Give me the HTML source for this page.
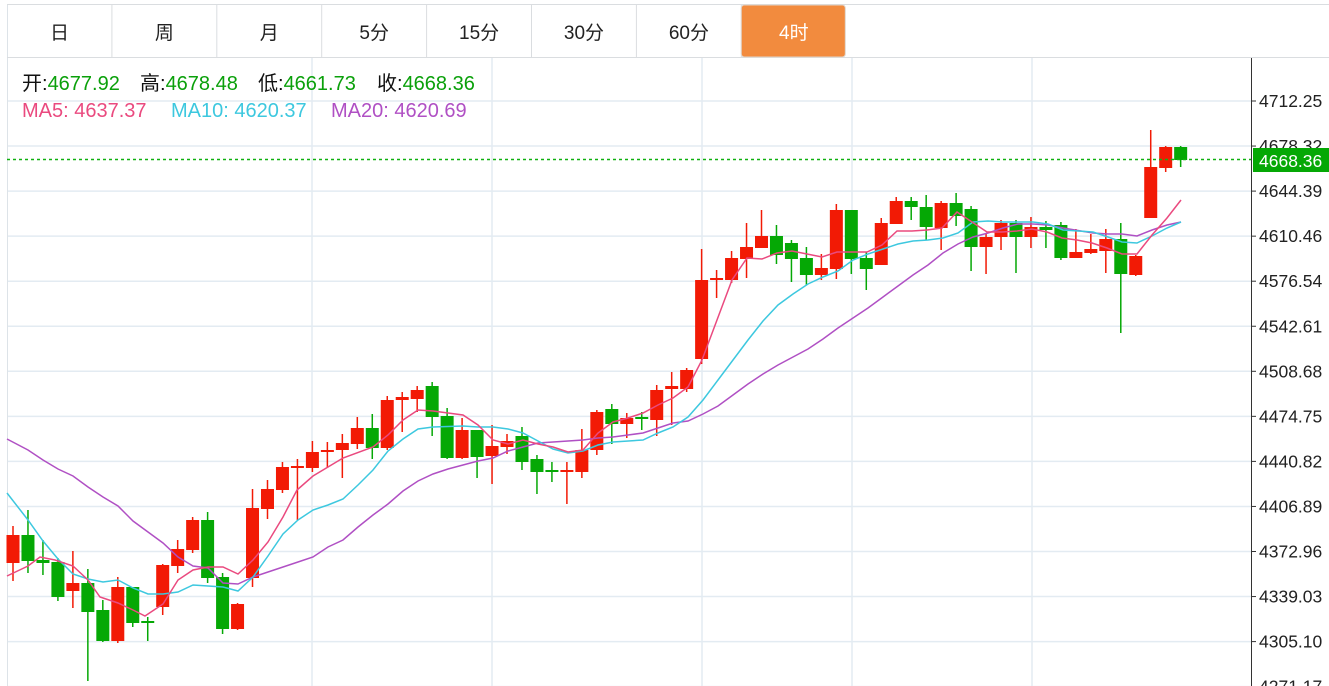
<!DOCTYPE html>
<html><head><meta charset="utf-8">
<style>
html,body{margin:0;padding:0;background:#fff;width:1329px;height:686px;overflow:hidden;}
svg{display:block;}
text{font-family:"Liberation Sans","Noto Sans CJK SC",sans-serif;}
</style></head>
<body>
<svg id="s" width="1329" height="686" xmlns="http://www.w3.org/2000/svg"></svg>
<script>
const s=document.getElementById('s');
let h='';
const vx=[312,492,702,852,1032];
for(let k=0;k<14;k++){const y=101+k*45.05;h+=`<line x1="7" y1="${y}" x2="1251" y2="${y}" stroke="#e3ebf2" stroke-width="1.5"/>`;}
vx.forEach(x=>h+=`<line x1="${x}" y1="58" x2="${x}" y2="686" stroke="#e3ebf2" stroke-width="1.5"/>`);
h+=`<line x1="7.5" y1="4" x2="7.5" y2="686" stroke="#dde3e8" stroke-width="1"/>`;
h+=`<line x1="7" y1="4.5" x2="1329" y2="4.5" stroke="#dadde0"/>`;
h+=`<line x1="7" y1="57.5" x2="1329" y2="57.5" stroke="#dadde0"/>`;
const tabs=['日','周','月','5分','15分','30分','60分','4时'];
tabs.forEach((t,i)=>{const x=7+i*104.9;
 if(i==7){h+=`<rect x="${x}" y="5" width="104" height="52" rx="3" fill="#f28b3e" stroke="#e0d6cc"/>`;}
 else h+=`<line x1="${x+104.9}" y1="5" x2="${x+104.9}" y2="57" stroke="#dadde0"/>`;
 h+=`<text x="${x+52.5}" y="39" text-anchor="middle" font-size="19" fill="${i==7?'#fff':'#222'}">${t}</text>`;});
const c=[
['R',535,563,526,581],['G',535,561,510,573],['G',560,563,540,575],['G',562,597,558,601],['R',583,591,551,608],
['G',583,612,569,681],['G',610,641,600,642],['R',587,641,577,643],['G',587,623,587,627],['G',621,623,617,641],
['R',565,607,564,615],['R',549,566,540,573],['R',520,550,517,553],['G',520,578,512,583],['G',577,629,573,634],
['R',604,629,603,630],['R',508,578,489,587],['R',489,509,480,519],['R',467,490,462,493],['R',466,468,459,520],
['R',452,468,441,472],['R',450,452,442,468],['R',443,450,434,478],['R',428,444,417,449],['G',428,448,414,459],
['R',400,448,396,450],['R',397,400,392,432],['R',390,399,386,412],['G',386,417,382,436],['G',416,458,408,459],
['R',430,458,418,459],['G',430,457,430,478],['R',446,456,425,484],['R',441,447,434,454],['G',436,462,427,470],
['G',459,472,455,494],['G',470,472,462,482],['R',470,472,462,504],['R',450,472,429,478],['R',412,450,410,455],
['G',409,424,404,444],['R',418,424,413,438],['G',417,419,412,430],['R',390,420,385,436],['R',386,389,372,425],
['R',370,389,368,392],['R',280,359,249,364],['R',278,280,270,298],['R',258,280,251,283],['R',247,259,223,278],
['R',236,248,210,248],['G',236,255,225,264],['G',243,259,240,282],['G',258,275,247,285],['R',268,275,254,280],
['R',210,269,204,279],['G',210,259,210,274],['G',258,269,252,290],['R',223,265,218,265],['R',201,224,197,224],
['G',201,207,197,220],['G',207,227,195,240],['R',203,228,201,250],['G',203,216,193,226],['G',209,247,206,271],
['R',237,247,234,274],['R',223,237,220,250],['G',223,237,220,273],['R',227,237,217,248],['G',227,230,221,248],
['G',225,258,222,260],['R',252,258,229,258],['R',249,253,234,254],['R',239,251,229,273],['G',239,274,223,333],
['R',256,275,255,276],['R',167,218,130,218],['R',147,168,146,172],['G',147,160,146,167]];
c.forEach((d,i)=>{const x=13+i*14.97;const col=d[0]=='R'?'#f21a05':'#05a805';
 h+=`<line x1="${x}" y1="${d[3]}" x2="${x}" y2="${d[4]}" stroke="${col}" stroke-width="1.5"/>`;
 h+=`<rect x="${x-6.5}" y="${d[1]}" width="13" height="${Math.max(1.5,d[2]-d[1])}" fill="${col}"/>`;});
const ma5=[[7,576],[28,566],[40,557],[55,560],[73,566],[88,580],[100,597],[118,603],[133,610],[145,616],[163,604],[178,580],[193,570],[208,567],[223,567],[238,574],[253,560],[268,542],[283,517],[297,490],[313,476],[343,458],[373,447],[388,435],[403,420],[418,410],[433,411],[448,413],[463,415],[478,425],[493,440],[508,444],[523,440],[538,444],[553,447],[568,452],[583,450],[598,433],[613,422],[628,418],[643,413],[658,405],[673,398],[688,387],[702,360],[717,320],[732,280],[747,258],[762,259],[777,253],[792,251],[807,254],[822,257],[837,252],[852,252],[867,252],[882,245],[897,231],[912,231],[927,230],[942,228],[957,212],[972,222],[987,232],[1002,232],[1017,231],[1032,229],[1047,232],[1062,238],[1077,240],[1092,243],[1107,248],[1122,254],[1137,254],[1152,235],[1167,218],[1181,200]];
const ma10=[[7,493],[28,520],[43,541],[58,559],[73,574],[88,579],[103,582],[118,580],[133,588],[148,594],[163,594],[178,592],[193,585],[208,586],[223,587],[238,591],[253,577],[268,556],[283,534],[298,520],[313,510],[328,505],[343,499],[358,485],[373,470],[388,451],[403,439],[418,429],[433,427],[463,426],[478,427],[493,427],[508,429],[523,433],[538,441],[553,449],[568,453],[583,451],[598,445],[613,442],[643,440],[658,433],[673,427],[688,417],[703,400],[718,380],[733,360],[748,340],[763,321],[778,305],[793,294],[808,284],[823,277],[838,271],[853,260],[868,254],[883,249],[898,244],[913,241],[928,240],[943,238],[958,233],[973,222],[988,221],[1003,222],[1018,222],[1033,222],[1048,224],[1063,230],[1093,232],[1108,237],[1122,242],[1137,243],[1152,236],[1167,228],[1181,222]];
const ma20=[[7,439],[28,450],[43,460],[58,469],[73,476],[88,487],[103,497],[118,506],[133,521],[148,532],[163,543],[178,557],[193,566],[208,568],[223,583],[238,584],[253,577],[268,572],[283,567],[298,562],[313,557],[328,547],[343,540],[358,527],[373,515],[388,504],[403,491],[418,481],[433,474],[448,469],[463,465],[478,461],[493,458],[508,451],[523,447],[538,443],[553,442],[568,441],[583,440],[598,438],[613,437],[628,435],[643,433],[658,428],[673,423],[688,421],[703,414],[718,406],[733,395],[748,384],[763,374],[778,365],[793,357],[808,349],[823,339],[838,328],[853,318],[868,308],[883,297],[898,286],[913,275],[928,265],[943,253],[958,244],[973,237],[988,233],[1003,228],[1018,224],[1033,224],[1048,225],[1063,228],[1093,233],[1108,234],[1122,234],[1137,236],[1152,230],[1167,225],[1181,222]];
[[ma20,'#b050c4'],[ma10,'#3dc8df'],[ma5,'#ea4a7f']].forEach(([p,col])=>{h+=`<polyline points="${p.map(q=>q.join(',')).join(' ')}" fill="none" stroke="${col}" stroke-width="1.5"/>`;});
h+=`<line x1="1251.5" y1="58" x2="1251.5" y2="686" stroke="#333"/>`;
const labs=['4712.25','4678.32','4644.39','4610.46','4576.54','4542.61','4508.68','4474.75','4440.82','4406.89','4372.96','4339.03','4305.10','4271.17'];
labs.forEach((t,k)=>{const y=101+k*45.05;h+=`<line x1="1251" y1="${y}" x2="1256" y2="${y}" stroke="#333"/><text x="1259" y="${y+6}" font-size="17.5" fill="#222">${t}</text>`;});
h+=`<line x1="7" y1="159.5" x2="1251" y2="159.5" stroke="#10b010" stroke-width="1.5" stroke-dasharray="3,3"/>`;
h+=`<rect x="1253" y="148" width="76" height="24" fill="#05a805"/><text x="1259" y="167" font-size="17.5" fill="#fff">4668.36</text>`;
const G='#0aa00a';
h+=`<g font-size="20"><text x="22" y="90" fill="#111">开:<tspan fill="${G}">4677.92</tspan></text><text x="140" y="90" fill="#111">高:<tspan fill="${G}">4678.48</tspan></text><text x="258" y="90" fill="#111">低:<tspan fill="${G}">4661.73</tspan></text><text x="377" y="90" fill="#111">收:<tspan fill="${G}">4668.36</tspan></text>`;
h+=`<text x="22" y="117" fill="#ea4a7f">MA5: 4637.37</text><text x="171" y="117" fill="#3dc8df">MA10: 4620.37</text><text x="331" y="117" fill="#b050c4">MA20: 4620.69</text></g>`;
s.innerHTML=h;
</script>
</body></html>
